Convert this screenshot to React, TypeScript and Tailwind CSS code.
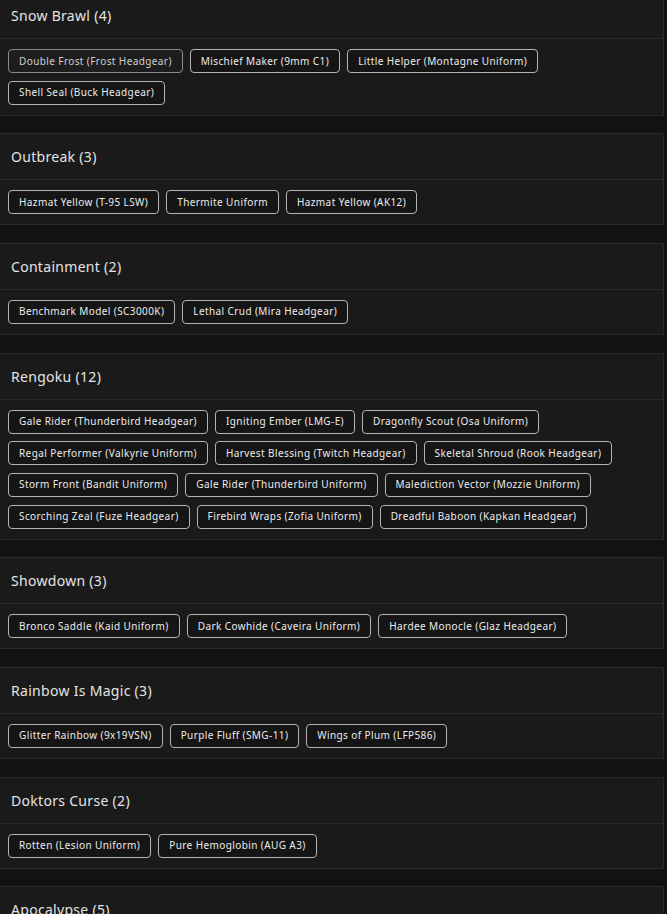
const EVENTS = [
  {
    name: "Snow Brawl",
    items: [
      "Double Frost (Frost Headgear)",
      "Mischief Maker (9mm C1)",
      "Little Helper (Montagne Uniform)",
      "Shell Seal (Buck Headgear)",
    ],
  },
  {
    name: "Outbreak",
    items: ["Hazmat Yellow (T-95 LSW)", "Thermite Uniform", "Hazmat Yellow (AK12)"],
  },
  {
    name: "Containment",
    items: ["Benchmark Model (SC3000K)", "Lethal Crud (Mira Headgear)"],
  },
  {
    name: "Rengoku",
    items: [
      "Gale Rider (Thunderbird Headgear)",
      "Igniting Ember (LMG-E)",
      "Dragonfly Scout (Osa Uniform)",
      "Regal Performer (Valkyrie Uniform)",
      "Harvest Blessing (Twitch Headgear)",
      "Skeletal Shroud (Rook Headgear)",
      "Storm Front (Bandit Uniform)",
      "Gale Rider (Thunderbird Uniform)",
      "Malediction Vector (Mozzie Uniform)",
      "Scorching Zeal (Fuze Headgear)",
      "Firebird Wraps (Zofia Uniform)",
      "Dreadful Baboon (Kapkan Headgear)",
    ],
  },
  {
    name: "Showdown",
    items: ["Bronco Saddle (Kaid Uniform)", "Dark Cowhide (Caveira Uniform)", "Hardee Monocle (Glaz Headgear)"],
  },
  {
    name: "Rainbow Is Magic",
    items: ["Glitter Rainbow (9x19VSN)", "Purple Fluff (SMG-11)", "Wings of Plum (LFP586)"],
  },
  {
    name: "Doktors Curse",
    items: ["Rotten (Lesion Uniform)", "Pure Hemoglobin (AUG A3)"],
  },
  {
    name: "Apocalypse",
    items: [
      "Sinister Sight (Ying Headgear)",
      "Ravaged Harbinger (Castle Uniform)",
      "Vile Vessel (Lion Headgear)",
      "Wicked Wanderer (Fuze Uniform)",
      "Malevolent Mask (Ela Headgear)",
    ],
  },
]

export default function App() {
  return (
    <div className="h-[914px] overflow-hidden bg-[#121212] font-['Noto_Sans',sans-serif]">
      <div className="-mt-[8px] flex w-[664px] flex-col gap-[17.67px]">
        {EVENTS.map((event) => (
          <section key={event.name} className="border-y border-r border-[#2a2a2a] bg-[#1a1a1a]">
            <div className="flex h-[46px] items-center border-b border-[#2a2a2a] px-[11px] text-[14px] tracking-[0.3px] text-[#e4e4e4]">
              {event.name} ({event.items.length})
            </div>
            <div className="flex flex-wrap gap-x-[7px] gap-y-[7.67px] px-[8px] pt-[10px] pb-[10px]">
              {event.items.map((item, i) => (
                <button
                  key={item}
                  className={
                    i === 0 && event.name === "Snow Brawl"
                      ? "flex h-[24px] items-center rounded-[4px] border border-[#8a8a8a] bg-[#1d1d1d] px-[10px] text-[10px] tracking-[0.4px] text-[#cfcfcf]"
                      : "flex h-[24px] items-center rounded-[4px] border border-[#b4b4b4] bg-[#151515] px-[10px] text-[10px] tracking-[0.4px] text-[#ececec]"
                  }
                >
                  {item}
                </button>
              ))}
            </div>
          </section>
        ))}
      </div>
    </div>
  )
}
